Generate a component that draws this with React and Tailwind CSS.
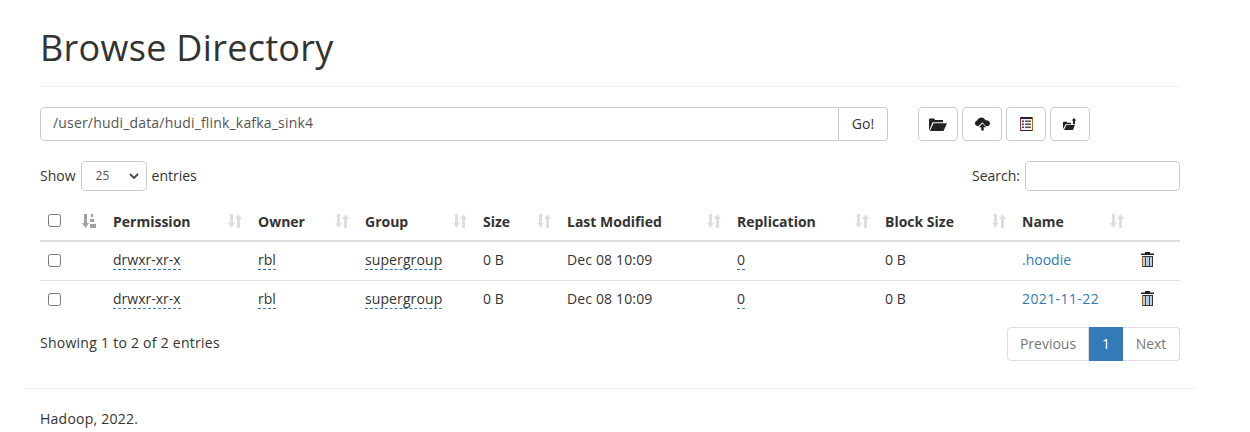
const FONT = "font-['Segoe_UI','Open_Sans','Noto_Sans',sans-serif]";

const COLUMNS = [
  { label: 'Permission', w: 'w-[145px]' },
  { label: 'Owner', w: 'w-[107px]' },
  { label: 'Group', w: 'w-[118px]' },
  { label: 'Size', w: 'w-[84px]' },
  { label: 'Last Modified', w: 'w-[170px]' },
  { label: 'Replication', w: 'w-[148px]' },
  { label: 'Block Size', w: 'w-[137px]' },
  { label: 'Name', w: 'w-[118px]' },
];

const ROWS = [
  { name: '.hoodie', nameClass: '', border: 'border-b border-[#ddd]' },
  { name: '2021-11-22', nameClass: 'tracking-[0.4px]', border: '' },
];

function SortIcon({ active }) {
  return (
    <svg width="14" height="14" viewBox="0 0 14 14" className={active ? 'text-[#a0a0a0]' : 'text-[#dedede]'} fill="currentColor">
      <path d="M2 0h3v9h2l-3.500 5L0 9h2z" />
      {active ? (
        <path d="M9 0h2v3H9zM8 5h4v3H8zM8 10h6v4H8z" />
      ) : (
        <path d="M9 14h3V5h2L10.500 0 7 5h2z" />
      )}
    </svg>
  );
}

function FolderOpenIcon() {
  return (
    <svg width="18" height="13" viewBox="0 0 18 13" fill="#222">
      <path d="M0 13V1.500Q0 .5 1 .5h4l1.200 1.500H14v2.300H3.500z" />
      <path d="M4.500 5.300H18L14.500 13H1z" />
    </svg>
  );
}

function CloudUpIcon() {
  return (
    <svg width="15" height="14" viewBox="0 0 16 14" fill="#222">
      <path d="M3.500 9.500C1.500 9.500 0 8 0 6.300 0 4.800 1 3.600 2.400 3.300 3 1.400 4.700 0 6.800 0c2 0 3.700 1.200 4.400 3 .3-.1.600-.1.900-.1 2.200 0 3.900 1.500 3.900 3.400 0 1.800-1.500 3.200-3.400 3.200h-1.100L8 5 3.500 9.500z" />
      <path d="M8 6.500l3.800 4H9.300V14H6.700v-3.500H4.200z" />
    </svg>
  );
}

function ListAltIcon() {
  return (
    <svg width="13" height="14" viewBox="0 0 13 14">
      <rect x="0" y="0" width="13" height="14" fill="#22223a" />
      <rect x="1" y="2" width="11" height="11" fill="#f4f4f4" />
      <path d="M2 3.500h2v1.500H2zM2 6.500h2v1.500H2zM2 9.500h2v1.500H2z" fill="#444" />
      <path d="M5 3.500h6v1.500H5zM5 6.500h6v1.500H5zM5 9.500h6v1.500H5z" fill="#555" />
      <path d="M0 0h1v14H0z" fill="#8a2f50" />
      <path d="M12 0h1v14h-1z" fill="#b8672c" />
    </svg>
  );
}

function FolderUpIcon() {
  return (
    <svg width="14" height="12" viewBox="0 0 14 12" fill="#222">
      <path d="M0 11V4.500q0-.8.800-.8h2.700l.8 1H8v1.300H2.800z" />
      <path d="M3.500 6.800H12L10 12H1z" />
      <path d="M11 0l2.300 2.600H12V6h-2V2.600H8.700z" />
    </svg>
  );
}

function TrashIcon() {
  return (
    <svg width="13" height="15" viewBox="0 0 13 15" className="ml-px">
      <path d="M4 0h5v1.500h4V3H0V1.500h4z" fill="#222" />
      <rect x="1" y="4" width="11" height="11" fill="#333" />
      <rect x="2" y="5" width="9" height="9" fill="#b9cfdf" />
      <path d="M4 5h1v9H4zM8 5h1v9H8z" fill="#444" />
      <path d="M6 5h1v9H6z" fill="#d9c09a" />
      <path d="M1 4h1v11H1z" fill="#a8601e" />
    </svg>
  );
}

function Dashed({ children }) {
  return <span className="border-b border-dashed border-[#337ab7]">{children}</span>;
}

function Toolbar() {
  return (
    <div className="flex gap-1 ml-[30px]">
      {[
        <FolderOpenIcon key="open" />,
        <CloudUpIcon key="up" />,
        <ListAltIcon key="list" />,
        <FolderUpIcon key="mk" />,
      ].map((icon, i) => (
        <button key={i} className="w-10 h-[34px] border border-[#ccc] rounded flex items-center justify-center bg-white">
          {icon}
        </button>
      ))}
    </div>
  );
}

function Row({ name, nameClass, border }) {
  return (
    <div className={`flex h-[39px] items-center pb-[4px] ${border}`}>
      <div className="w-[73px] pl-2 flex items-center">
        <input type="checkbox" className="w-[13px] h-[13px] mt-[2px]" />
      </div>
      <div className={COLUMNS[0].w}><Dashed>drwxr-xr-x</Dashed></div>
      <div className={COLUMNS[1].w}><Dashed>rbl</Dashed></div>
      <div className={`${COLUMNS[2].w} tracking-[0.1px]`}><Dashed>supergroup</Dashed></div>
      <div className={COLUMNS[3].w}>0 B</div>
      <div className={`${COLUMNS[4].w} tracking-[0.15px]`}>Dec 08 10:09</div>
      <div className={COLUMNS[5].w}><Dashed>0</Dashed></div>
      <div className={COLUMNS[6].w}>0 B</div>
      <div className={`${COLUMNS[7].w} text-[#337ab7] ${nameClass}`}>{name}</div>
      <TrashIcon />
    </div>
  );
}

export default function App() {
  return (
    <div className={`bg-white h-[432px] overflow-hidden text-[14px] text-[#333] ${FONT}`}>
      <div className="w-[1170px] ml-[25px] px-[15px]">
        <div className="h-[87px] border-b border-[#eee] pt-[20px]">
          <h1 className="text-[36px] leading-[55px] text-[#333] tracking-[0.3px]">Browse Directory</h1>
        </div>

        <div className="flex mt-5">
          <div className="flex w-[848px] h-[34px]">
            <div className="flex-1 border border-[#ccc] rounded-l px-3 pb-[3px] flex items-center text-[#555] tracking-[0.18px]">
              /user/hudi_data/hudi_flink_kafka_sink4
            </div>
            <button className="w-[49px] pb-[2px] border border-l-0 border-[#ccc] rounded-r">Go!</button>
          </div>
          <Toolbar />
        </div>

        <div className="flex justify-between items-center mt-5 h-[30px]">
          <div className="flex items-center gap-[5px]">
            <span className="pb-[2px]">Show</span>
            <div className="w-[66px] h-[30px] border border-[#ccc] rounded flex items-center justify-between pl-[14px] pr-[7px] text-[12px] text-[#555]">
              25
              <svg width="10" height="6" viewBox="0 0 10 6" fill="none" stroke="#444" strokeWidth="1.800"><path d="M1 1l4 4 4-4" /></svg>
            </div>
            <span className="pb-[2px]">entries</span>
          </div>
          <div className="flex items-center gap-[5px]">
            <span className="pb-[2px]">Search:</span>
            <div className="w-[155px] h-[30px] border border-[#ccc] rounded" />
          </div>
        </div>

        <div className="flex h-[41px] mt-[10px] items-center border-b-2 border-[#ddd] font-bold">
          <div className="w-[73px] pl-2 flex items-center gap-[21px]">
            <input type="checkbox" className="w-[13px] h-[13px]" />
            <SortIcon active />
          </div>
          {COLUMNS.map((c) => (
            <div key={c.label} className={`${c.w} flex items-center justify-between pr-[16px]`}>
              <span className="pt-[2px]">{c.label}</span>
              <SortIcon />
            </div>
          ))}
        </div>

        {ROWS.map((r) => <Row key={r.name} {...r} />)}

        <div className="flex justify-between items-start mt-[7px]">
          <div className="pt-[5px] tracking-[0.26px]">Showing 1 to 2 of 2 entries</div>
          <div className="flex h-[34px] text-[#777]">
            <div className="w-[82px] pb-[2px] border border-[#ddd] rounded-l flex items-center justify-center">Previous</div>
            <div className="w-[34px] pb-[2px] bg-[#337ab7] text-white flex items-center justify-center">1</div>
            <div className="w-[57px] pb-[2px] border border-l-0 border-[#ddd] rounded-r flex items-center justify-center">Next</div>
          </div>
        </div>
      </div>

      <div className="w-[1170px] ml-[25px] border-t border-[#eee] mt-[27px] px-[15px] pt-[19px] tracking-[0.25px]">
        Hadoop, 2022.
      </div>
    </div>
  );
}
